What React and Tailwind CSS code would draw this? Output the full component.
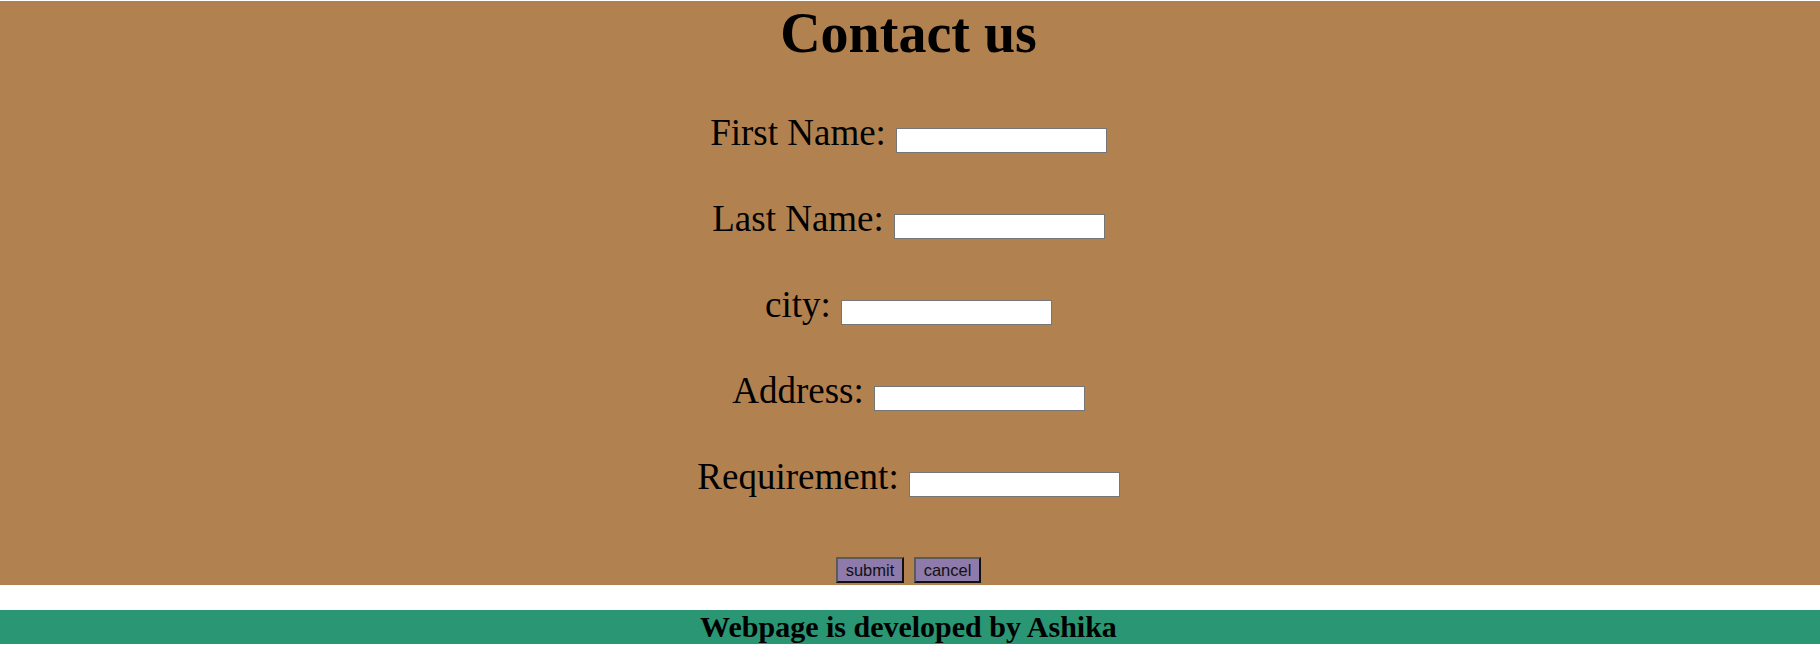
const fields = ["First Name:", "Last Name:", "city:", "Address:", "Requirement:"];

const Field = ({ label }) => (
  <div className="flex items-end gap-[10px] h-[42px]">
    <span className="text-[37px] leading-[42px]">{label}</span>
    <input
      type="text"
      className="mb-[1px] w-[211px] h-[25px] bg-white border border-[#767676] outline-none"
    />
  </div>
);

export default function App() {
  return (
    <div className="bg-white w-full h-[648px] pt-[1px] text-black" style={{ fontFamily: '"Liberation Serif", "Times New Roman", serif' }}>
      <div className="bg-[#b28150] h-[584px] flex flex-col items-center pr-[3px]">
        <h1 className="text-[56px] font-bold leading-[64px]">Contact us</h1>
        <form className="flex flex-col items-center gap-[44px] mt-[47px]" onSubmit={(e) => e.preventDefault()}>
          {fields.map((f) => (
            <Field key={f} label={f} />
          ))}
        </form>
        <div className="flex gap-[10px] mt-[59px]" style={{ fontFamily: '"Liberation Sans", Arial, sans-serif' }}>
          <button className="w-[68px] h-[26px] bg-[#8e7aab] border-2 border-t-[#5a5a5a] border-l-[#5a5a5a] border-b-[#111] border-r-[#111] text-[16.5px] leading-none text-[#111]">
            submit
          </button>
          <button className="w-[67px] h-[26px] bg-[#8e7aab] border-2 border-t-[#5a5a5a] border-l-[#5a5a5a] border-b-[#111] border-r-[#111] text-[16.5px] leading-none text-[#111]">
            cancel
          </button>
        </div>
      </div>
      <div className="h-[25px]" />
      <footer className="bg-[#2a9673] h-[34px] flex justify-center pr-[3px]">
        <h3 className="text-[30px] font-bold leading-[34px]">Webpage is developed by Ashika</h3>
      </footer>
    </div>
  );
}
